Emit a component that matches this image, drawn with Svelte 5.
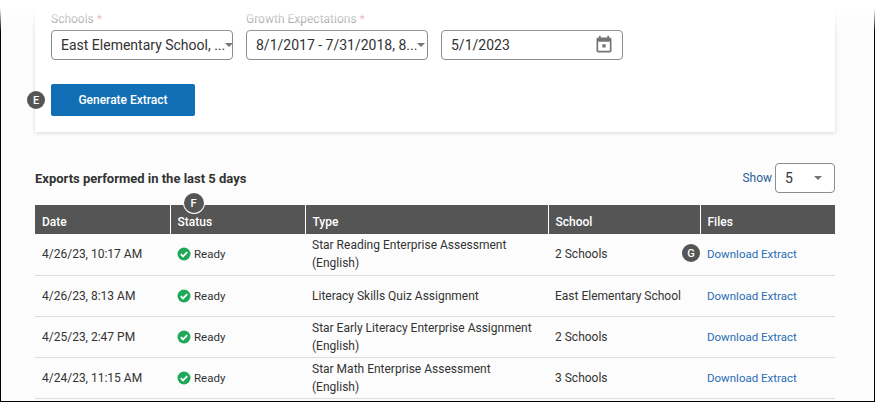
<script>
  const rows = [
    { date: '4/26/23, 10:17 AM', type: ['Star Reading Enterprise Assessment', '(English)'], school: '2 Schools', badge: true },
    { date: '4/26/23, 8:13 AM', type: ['Literacy Skills Quiz Assignment'], school: 'East Elementary School' },
    { date: '4/25/23, 2:47 PM', type: ['Star Early Literacy Enterprise Assignment', '(English)'], school: '2 Schools' },
    { date: '4/24/23, 11:15 AM', type: ['Star Math Enterprise Assessment', '(English)'], school: '3 Schools' }
  ];
</script>

<div class="frame">
  <div class="fade"></div>
  <section class="card">
    <div class="fields">
      <div class="field">
        <span class="label">Schools <i>*</i></span>
        <div class="select"><span>East Elementary School, ...</span><b class="caret"></b></div>
      </div>
      <div class="field">
        <span class="label">Growth Expectations <i>*</i></span>
        <div class="select"><span>8/1/2017 - 7/31/2018, 8...</span><b class="caret"></b></div>
      </div>
      <div class="field">
        <span class="label">&nbsp;</span>
        <div class="select date">
          <span>5/1/2023</span>
          <svg width="20" height="20" viewBox="0 0 24 24" aria-hidden="true"><path fill="#757575" fill-rule="evenodd" d="M19 3h-1V1h-2v2H8V1H6v2H5c-1.1 0-2 .9-2 2v14c0 1.100.9 2 2 2h14c1.100 0 2-.9 2-2V5c0-1.100-.9-2-2-2zm0 16H5V8h14v11zM10 11h4v4h-4z"/></svg>
        </div>
      </div>
    </div>
    <div class="action">
      <span class="badge side">E</span>
      <button type="button">Generate Extract</button>
    </div>
  </section>

  <div class="head">
    <h2>Exports performed in the last 5 days</h2>
    <div class="show">
      <span>Show</span>
      <div class="select small"><span>5</span><b class="caret"></b></div>
    </div>
  </div>

  <table>
    <colgroup><col class="c1" /><col class="c2" /><col class="c3" /><col class="c4" /><col /></colgroup>
    <thead>
      <tr>
        <th>Date</th>
        <th class="status-head"><span class="badge top">F</span>Status</th>
        <th>Type</th>
        <th>School</th>
        <th>Files</th>
      </tr>
    </thead>
    <tbody>
      {#each rows as r}
        <tr>
          <td>{r.date}</td>
          <td>
            <span class="ready">
              <svg width="14" height="14" viewBox="0 0 14 14" aria-hidden="true"><circle cx="7" cy="7" r="6.500" fill="#1fa85a"/><path d="M3.800 7.200l2.200 2.200 4.200-4.300" fill="none" stroke="#fff" stroke-width="1.800"/></svg>
              Ready
            </span>
          </td>
          <td>{#each r.type as line}<div>{line}</div>{/each}</td>
          <td>{r.school}</td>
          <td class="files">
            {#if r.badge}<span class="badge link-badge">G</span>{/if}
            <a href="#top">Download Extract</a>
          </td>
        </tr>
      {/each}
    </tbody>
  </table>
</div>

<style>
  :global(body) { margin: 0; background: #fff; }
  .frame {
    position: relative;
    box-sizing: border-box;
    width: 875px;
    height: 402px;
    padding: 0 39px 0 34px;
    border: 1px solid #000;
    background: #fcfcfc;
    font-family: Roboto, "Liberation Sans", sans-serif;
    color: #333;
  }
  .fade {
    position: absolute;
    top: -1px;
    left: -1px;
    right: -1px;
    height: 32px;
    background: linear-gradient(#fff 0, #fff 8px, rgba(255, 255, 255, 0) 100%);
    z-index: 2;
    pointer-events: none;
  }
  .card {
    box-sizing: border-box;
    height: 131px;
    padding: 11px 16px 0;
    background: #fff;
    box-shadow: 0 1px 4px rgba(0, 0, 0, 0.14);
  }
  .fields { display: flex; gap: 13px; }
  .field { display: flex; flex-direction: column; width: 182px; }
  .label { height: 18px; font-size: 12px; line-height: 14px; color: #777; }
  .label i { font-style: normal; color: #d9534f; }
  .select {
    box-sizing: border-box;
    display: flex;
    align-items: center;
    justify-content: space-between;
    height: 30px;
    padding: 0 9px 0 9px;
    border: 1px solid #8c8c8c;
    border-radius: 4px;
    background: #fff;
    font-size: 14px;
    color: #333;
    white-space: nowrap;
  }
  .select.date { padding-right: 8px; }
  .caret {
    width: 0;
    height: 0;
    border-left: 4.500px solid transparent;
    border-right: 4.500px solid transparent;
    border-top: 4.500px solid #757575;
    flex: none;
  }
  .action { position: relative; margin-top: 24px; }
  button {
    display: block;
    width: 144px;
    height: 32px;
    padding: 0;
    border: 0;
    border-radius: 2px;
    background: #136fb5;
    color: #fff;
    font: 500 12px Roboto, "Liberation Sans", sans-serif;
  }
  .badge {
    position: absolute;
    display: flex;
    align-items: center;
    justify-content: center;
    box-sizing: border-box;
    width: 18px;
    height: 18px;
    border-radius: 50%;
    background: #555;
    color: #fff;
    font: 500 11px Roboto, "Liberation Sans", sans-serif;
  }
  .side { left: -24px; top: 7px; }
  .head {
    display: flex;
    justify-content: space-between;
    align-items: center;
    height: 30px;
    margin-top: 31px;
    margin-bottom: 12px;
  }
  h2 { margin: 0; font-size: 13px; font-weight: 700; color: #333; }
  .show { display: flex; align-items: center; gap: 3px; font-size: 12px; color: #2a5f95; }
  .select.small { width: 60px; padding-right: 12px; }
  table {
    width: 800px;
    border-collapse: collapse;
    table-layout: fixed;
    font-size: 12px;
  }
  .c1 { width: 135px; }
  .c2 { width: 135px; }
  .c3 { width: 243px; }
  .c4 { width: 152px; }
  th {
    position: relative;
    box-sizing: border-box;
    height: 29px;
    padding: 5px 0 0 7px;
    background: #555;
    border-right: 1px solid #fff;
    color: #fff;
    font-size: 12px;
    font-weight: 500;
    text-align: left;
  }
  th:last-child { border-right: 0; }
  .top {
    left: 13px;
    top: -12px;
    width: 20px;
    height: 20px;
    box-shadow: 0 0 0 1px #fff;
  }
  td {
    box-sizing: border-box;
    height: 41px;
    padding: 0 0 0 7px;
    border-bottom: 1px solid #ddd;
    line-height: 18px;
    vertical-align: middle;
    color: #333;
  }
  .ready { display: flex; align-items: center; gap: 3px; font-size: 11.500px; }
  .files { position: relative; }
  .link-badge { left: -18px; top: 10px; }
  a { color: #2a6db5; font-size: 11.500px; text-decoration: none; }
</style>
